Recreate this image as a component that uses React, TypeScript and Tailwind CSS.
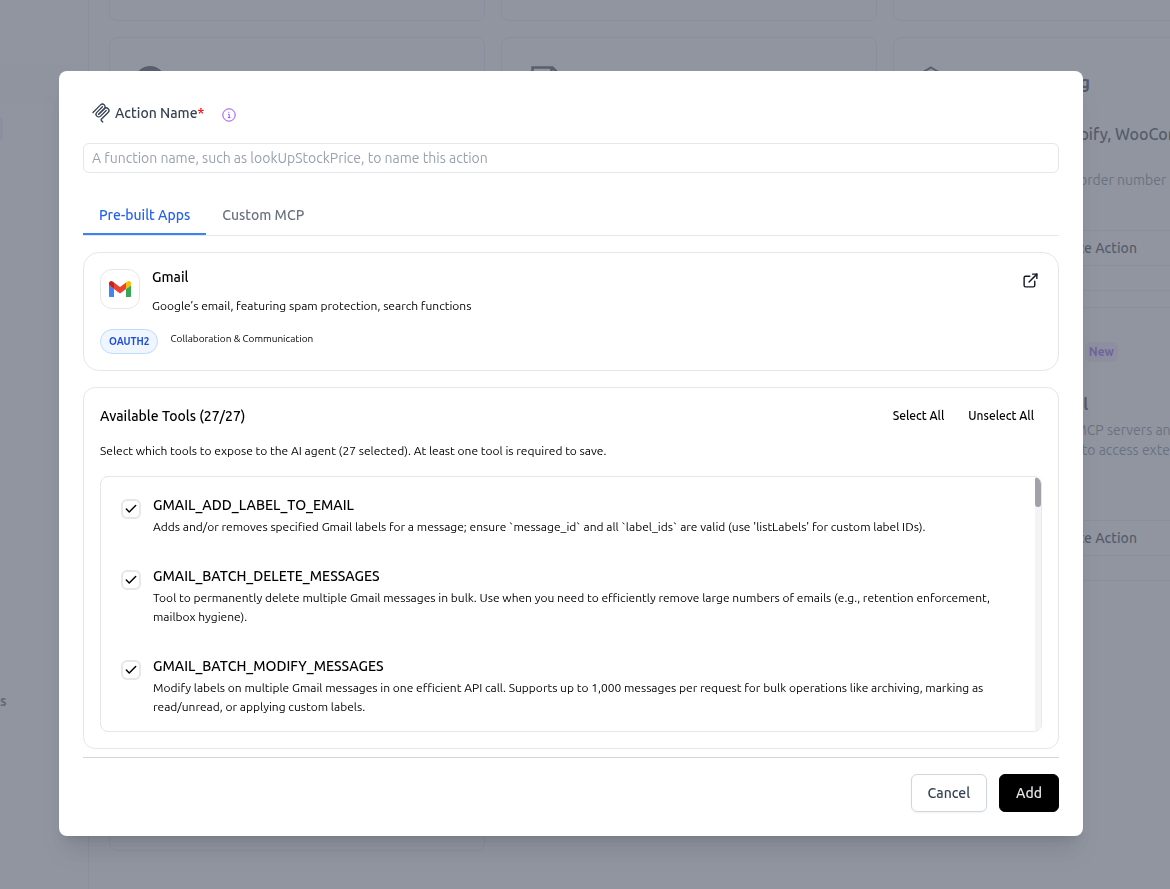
import React, { useState } from "react";
import { Check, CirclePlus, ExternalLink } from "lucide-react";

const TOOLS = [
  {
    name: "GMAIL_ADD_LABEL_TO_EMAIL",
    text: "Adds and/or removes specified Gmail labels for a message; ensure `message_id` and all `label_ids` are valid (use 'listLabels' for custom label IDs).",
  },
  {
    name: "GMAIL_BATCH_DELETE_MESSAGES",
    text: "Tool to permanently delete multiple Gmail messages in bulk. Use when you need to efficiently remove large numbers of emails (e.g., retention enforcement, mailbox hygiene).",
  },
  {
    name: "GMAIL_BATCH_MODIFY_MESSAGES",
    text: "Modify labels on multiple Gmail messages in one efficient API call. Supports up to 1,000 messages per request for bulk operations like archiving, marking as read/unread, or applying custom labels.",
  },
];

function McpIcon() {
  return (
    <svg viewBox="0 0 180 180" className="size-5" fill="none" stroke="currentColor" strokeWidth="12" strokeLinecap="round" aria-hidden="true">
      <path d="M18 84.85L85.88 16.97C95.25 7.6 110.45 7.6 119.82 16.97C129.2 26.34 129.2 41.54 119.82 50.91L68.56 102.18" />
      <path d="M69.27 101.47L119.82 50.91C129.2 41.54 144.39 41.54 153.77 50.91L154.12 51.27C163.49 60.64 163.49 75.83 154.12 85.21L92.72 146.6C89.6 149.72 89.6 154.79 92.72 157.91L105.33 170.52" />
      <path d="M102.85 33.94L52.65 84.15C43.28 93.52 43.28 108.71 52.65 118.09C62.02 127.46 77.22 127.46 86.59 118.09L136.79 67.88" />
    </svg>
  );
}

function InfoIcon() {
  return (
    <svg viewBox="0 0 14 14" className="size-3.5" fill="none" stroke="#8b3df5" strokeWidth="0.9" aria-hidden="true">
      <circle cx="7" cy="7" r="6.2" />
      <path d="M6 6.4h1.2v3.2M5.8 9.6h2.6M6.4 4.4h1" />
    </svg>
  );
}

function GmailIcon() {
  return (
    <svg viewBox="52 42 88 66" className="w-[22px]" aria-hidden="true">
      <path fill="#4285f4" d="M58 108h14V74L52 59v43c0 3.32 2.69 6 6 6" />
      <path fill="#34a853" d="M120 108h14c3.32 0 6-2.69 6-6V59l-20 15" />
      <path fill="#fbbc04" d="M120 48v26l20-15v-8c0-7.42-8.47-11.65-14.4-7.2" />
      <path fill="#ea4335" d="M72 74V48l24 18 24-18v26L96 92" />
      <path fill="#c5221f" d="M52 51v8l20 15V48l-5.6-4.2c-5.94-4.45-14.4-.22-14.4 7.2" />
    </svg>
  );
}

function ActionButton() {
  return (
    <button className="mt-auto flex h-9 w-full shrink-0 items-center justify-center gap-2 border border-gray-200 text-sm font-medium text-gray-900">
      <CirclePlus size={16} />
      Create Action
    </button>
  );
}

function Card({ children, className = "" }: { children?: React.ReactNode; className?: string }) {
  return <div className={"flex flex-col rounded-lg border border-gray-200 bg-white px-6 pt-7 pb-6 " + className}>{children}</div>;
}

function Background() {
  return (
    <div className="flex h-screen overflow-hidden bg-white" inert>
      <aside className="flex w-[89px] shrink-0 flex-col border-r border-gray-200">
        <div className="mt-[65px] h-10 bg-gray-50" />
        <div className="mt-3 h-6 w-[3px] rounded-r bg-purple-100" />
        <div className="mt-[550px] text-sm font-semibold text-gray-600">s</div>
      </aside>
      <main className="min-w-0 flex-1 pl-5">
        <div className="grid w-[1160px] grid-cols-3 gap-4">
          <Card className="-mt-10 h-[61px]" />
          <Card className="-mt-10 h-[61px]" />
          <Card className="-mt-10 h-[61px]" />
          <Card className="h-[254px]">
            <div className="size-8 rounded-full bg-gray-800" />
          </Card>
          <Card className="h-[254px]">
            <svg viewBox="0 0 32 32" className="size-8 overflow-visible" fill="none" stroke="#1f2937" strokeWidth="2.5" aria-hidden="true">
              <path d="M6.5 1.5h20l6 6V31h-26zM25.5 2v7h7" />
            </svg>
          </Card>
          <Card className="h-[254px]">
            <div className="flex shrink-0 justify-between">
              <svg viewBox="0 0 32 32" className="size-8" fill="none" stroke="#1f2937" strokeWidth="2" aria-hidden="true">
                <path d="M13 1.5l12 7v15l-12 7-12-7v-15z" />
              </svg>
              <h2 className="mt-1 mr-[154px] text-lg leading-6 font-semibold text-gray-900">Tracking</h2>
            </div>
            <p className="mt-6 overflow-hidden pl-[134px] text-base font-medium whitespace-nowrap text-gray-900">Shopify, WooCommerce</p>
            <p className="mt-[22px] overflow-hidden pl-[143px] text-sm leading-6 whitespace-nowrap text-gray-500">by order number</p>
            <ActionButton />
          </Card>
          <Card className="h-[274px]" />
          <Card className="h-[274px]" />
          <Card className="h-[274px]">
            <div className="flex justify-end pr-[126px]">
              <span className="mt-1.5 rounded-md bg-purple-100 px-1 py-0.5 text-xs leading-4 font-bold text-[#7c3aed]">New</span>
            </div>
            <h2 className="mt-[30px] pr-[156px] text-right text-base leading-6 font-semibold text-gray-900">Tool</h2>
            <p className="mt-1 pl-[84px] text-sm leading-5 whitespace-nowrap text-gray-500">Connect to MCP servers and</p>
            <p className="pl-[129px] text-sm leading-5 whitespace-nowrap text-gray-500">tools to access external</p>
            <ActionButton />
          </Card>
          <Card className="h-[254px]" />
        </div>
      </main>
    </div>
  );
}

export default function App() {
  const [selected, setSelected] = useState([true, true, true]);
  const setAll = (value: boolean) => setSelected(TOOLS.map(() => value));

  return (
    <div className="font-[Ubuntu,Roboto,sans-serif] text-black">
      <Background />
      <div className="fixed inset-0 flex items-start justify-center bg-[#6b7280]/75 pt-[71px] pr-7">
        <div role="dialog" aria-modal="true" aria-label="Add action" className="w-full max-w-5xl rounded-lg bg-white px-6 pt-7 pb-6 shadow-xl">
          <div className="flex h-7 items-center pl-2">
            <label htmlFor="action-name" className="flex items-center gap-1 text-sm font-medium text-gray-700">
              <McpIcon />
              <span>
                Action Name<span className="text-[#ff0000]">*</span>
              </span>
            </label>
            <button className="mt-1 ml-[18px]" aria-label="About action names">
              <InfoIcon />
            </button>
          </div>
          <input
            id="action-name"
            placeholder="A function name, such as lookUpStockPrice, to name this action"
            className="mt-4 block h-[30px] w-full rounded-md border border-gray-200 px-2 text-sm placeholder:text-gray-400"
          />

          <div role="tablist" className="mt-[22px] flex border-b border-gray-200 text-sm font-medium">
            <button role="tab" aria-selected="true" className="h-10 border-b-2 border-[#3b82f6] px-4 pt-0.5 text-[#2563eb]">
              Pre-built Apps
            </button>
            <button role="tab" aria-selected="false" className="h-10 px-4 text-gray-500">
              Custom MCP
            </button>
          </div>

          <section className="mt-4 rounded-2xl border border-gray-200 p-4">
            <div className="flex gap-3">
              <div className="flex size-10 items-center justify-center rounded-xl border border-gray-200">
                <GmailIcon />
              </div>
              <div className="flex-1">
                <h3 className="text-sm leading-4 font-medium">Gmail</h3>
                <p className="mt-[11px] text-xs leading-5">Google’s email, featuring spam protection, search functions</p>
              </div>
              <a href="#gmail" aria-label="Open Gmail" className="m-[3px] text-gray-900">
                <ExternalLink size={17} />
              </a>
            </div>
            <div className="mt-[13px] flex gap-3">
              <span className="flex h-[25px] items-center rounded-full border border-blue-200 bg-blue-50 px-2 text-[10px] font-bold text-[#1d4ed8]">OAUTH2</span>
              <span className="text-[10px] leading-5">Collaboration &amp; Communication</span>
            </div>
          </section>

          <section className="mt-4 rounded-xl border border-gray-200 p-4">
            <div className="flex h-6 items-center">
              <h3 className="flex-1 text-sm font-medium">Available Tools (27/27)</h3>
              <div className="flex gap-6 pr-2 text-xs font-medium">
                <button onClick={() => setAll(true)}>Select All</button>
                <button onClick={() => setAll(false)}>Unselect All</button>
              </div>
            </div>
            <p className="mt-[13px] text-xs leading-5">Select which tools to expose to the AI agent (27 selected). At least one tool is required to save.</p>
            <div className="mt-[15px] flex h-64 overflow-hidden rounded-lg border border-gray-200">
              <div className="flex flex-1 flex-col gap-[27px] pt-4 pl-5">
                {TOOLS.map((tool, i) => (
                  <label key={tool.name} className="flex gap-3 pr-6">
                    <span className="relative mt-1.5 size-5 shrink-0">
                      <input
                        type="checkbox"
                        checked={selected[i]}
                        onChange={() => setSelected(selected.map((v, j) => (j === i ? !v : v)))}
                        className="block size-5 appearance-none rounded-md border-2 border-gray-200 bg-white"
                      />
                      {selected[i] && <Check size={14} strokeWidth={2.5} className="pointer-events-none absolute top-[3px] left-[3px]" />}
                    </span>
                    <span>
                      <span className="block text-sm leading-6 font-medium">{tool.name}</span>
                      <span className="block text-xs leading-relaxed">{tool.text}</span>
                    </span>
                  </label>
                ))}
              </div>
              <div className="w-1.5 shrink-0 bg-gray-100">
                <div className="h-[30px] rounded-full bg-[#a1a1aa]" />
              </div>
            </div>
          </section>

          <footer className="mt-2 flex justify-end gap-3 border-t border-gray-300 pt-4 text-sm font-medium">
            <button className="h-[38px] rounded-md border border-gray-300 px-4 text-gray-700 shadow-xs">Cancel</button>
            <button className="h-[38px] rounded-md border border-black bg-black px-4 text-gray-200">Add</button>
          </footer>
        </div>
      </div>
    </div>
  );
}
